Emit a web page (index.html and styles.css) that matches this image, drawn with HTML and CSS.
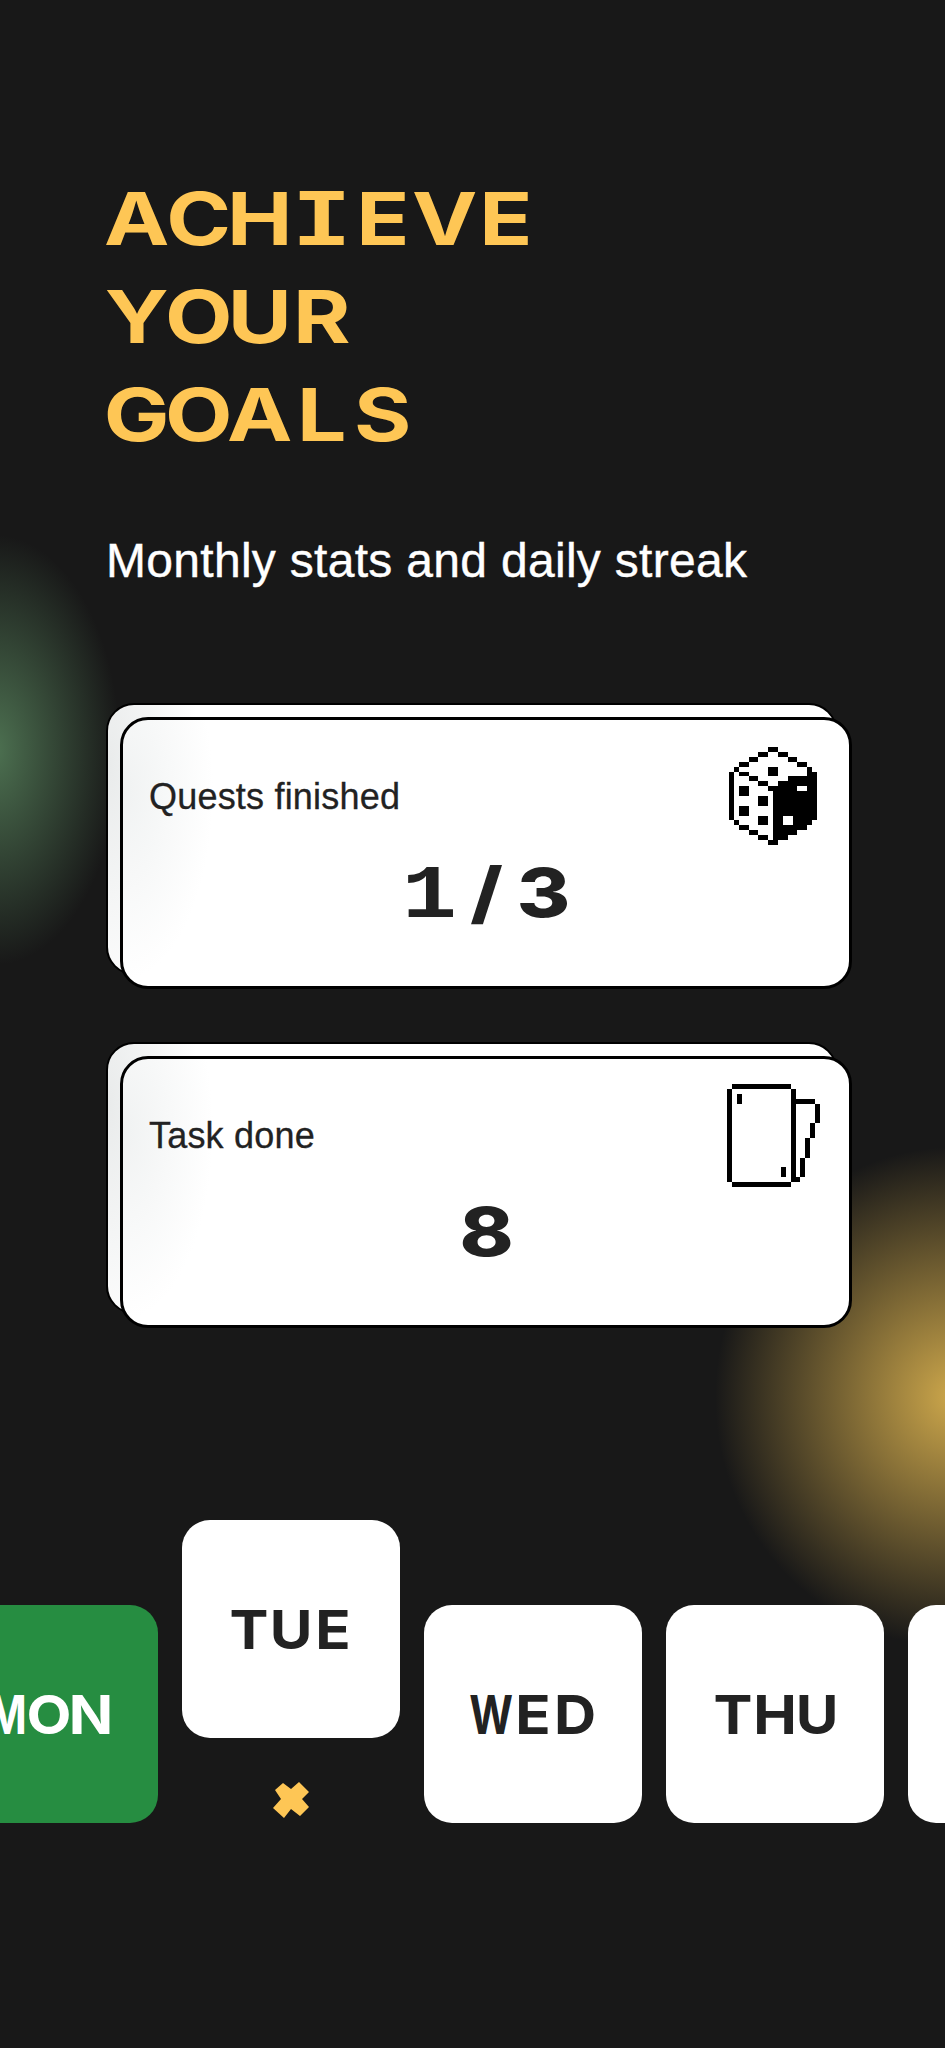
FILE: index.html
```html
<!DOCTYPE html>
<html lang="en">
<head>
    <meta charset="UTF-8">
    <meta name="viewport" content="width=device-width, initial-scale=1.0">
    <title>Achieve your goals</title>
    <link rel="stylesheet" href="styles.css">
</head>
<body>
    <main class="screen">
        <h1 class="title">
            <span class="line"><span class="ch">A</span><span class="ch">C</span><span class="ch">H</span><span class="ch ch-slab">I</span><span class="ch">E</span><span class="ch">V</span><span class="ch">E</span></span>
            <span class="line"><span class="ch">Y</span><span class="ch">O</span><span class="ch">U</span><span class="ch">R</span></span>
            <span class="line"><span class="ch">G</span><span class="ch">O</span><span class="ch">A</span><span class="ch">L</span><span class="ch">S</span></span>
        </h1>
        <p class="subtitle">Monthly stats and daily streak</p>

        <section class="stats">
            <div class="card-back">
                <div class="card">
                    <div class="card-head">
                        <span class="card-label">Quests finished</span>
                        <svg class="dice" viewBox="0 0 18 20" shape-rendering="crispEdges">
                            <path d="M8 .5h2M6 1.5h2M10 1.5h2M4 2.5h2M12 2.5h2M2 3.5h2M14 3.5h2
                                     M1 4.5h1M8 4.5h2M16 4.5h1M0 5.5h1M2 5.5h2M8 5.5h2M16 5.5h2
                                     M0 6.5h1M4 6.5h2M12 6.5h6M0 7.5h1M6 7.5h2M10 7.5h8
                                     M0 8.5h1M2 8.5h2M8 8.5h6M16 8.5h2M0 9.5h1M2 9.5h2M9 9.5h9
                                     M0 10.5h1M6 10.5h2M9 10.5h9M0 11.5h1M6 11.5h2M9 11.5h9
                                     M0 12.5h1M2 12.5h2M9 12.5h9M0 13.5h1M2 13.5h2M9 13.5h9
                                     M0 14.5h1M6 14.5h2M9 14.5h2M13 14.5h5M1 15.5h1M6 15.5h2M9 15.5h2M13 15.5h4
                                     M2 16.5h2M9 16.5h7M4 17.5h2M9 17.5h5M6 18.5h2M9 18.5h3M8 19.5h2"/>
                        </svg>
                    </div>
                    <div class="card-value"><span class="ch ch-slab">1</span><span class="ch">/</span><span class="ch">3</span></div>
                </div>
            </div>

            <div class="card-back">
                <div class="card">
                    <div class="card-head">
                        <span class="card-label">Task done</span>
                        <svg class="mug" viewBox="0 0 19 21" shape-rendering="crispEdges">
                            <path d="M1 .5h12M.5 1v19M1 20.5h12M13.5 1v19M2.5 2v2M11.5 17v2
                                     M14 3.5h4M18.5 4v4M17.5 8v3M16.5 11v4M15.5 15v4M14 19.5h1"/>
                        </svg>
                    </div>
                    <div class="card-value"><span class="ch">8</span></div>
                </div>
            </div>
        </section>

        <section class="days">
            <div class="day day-done"><span class="day-name"><span class="ch ch-wide">M</span><span class="ch">O</span><span class="ch">N</span></span></div>
            <div class="day-today">
                <div class="day"><span class="day-name"><span class="ch">T</span><span class="ch">U</span><span class="ch">E</span></span></div>
                <svg class="day-mark" viewBox="0 0 37 36">
                    <path d="M2 8 10 1 18 7 26 0 36 10 29 17 36 25 27 34 18 27 11 36 0 26 8 17z"/>
                </svg>
            </div>
            <div class="day"><span class="day-name"><span class="ch ch-wide">W</span><span class="ch">E</span><span class="ch">D</span></span></div>
            <div class="day"><span class="day-name"><span class="ch">T</span><span class="ch">H</span><span class="ch">U</span></span></div>
            <div class="day"></div>
        </section>
    </main>
</body>
</html>
```

FILE: styles.css
```css
body {
    margin: 0;
    background-color: #181818;
    font-family: "Liberation Sans", Arial, sans-serif;
}
.screen {
    box-sizing: border-box;
    width: 945px;
    height: 2048px;
    padding-top: 170px;
    overflow: hidden;
    background-image:
        radial-gradient(ellipse 125px 215px at -5px 750px, rgba(90, 135, 95, 0.8), rgba(90, 135, 95, 0)),
        radial-gradient(ellipse 240px 250px at 955px 1397px, rgba(215, 175, 78, 0.95), rgba(215, 175, 78, 0));
}
.ch {
    display: inline-flex;
    justify-content: center;
    transform: scaleX(1.2);
}
/* the I and the 1 have feet in the original face */
.ch-slab {
    font-family: "Liberation Mono", monospace;
    font-size: 1.12em;
    font-weight: bold;
}
.title {
    margin: 0 0 0 106px;
    font-family: Inter, sans-serif;
    font-size: 73px;
    font-weight: 700;
    line-height: 98px;
    color: #fec655;
}
.title .ch {
    width: 61.5px;
}
.line {
    display: block;
    height: 98px;
}
.subtitle {
    margin: 67px 0 0 106px;
    font-size: 48px;
    line-height: 60px;
    letter-spacing: 0.3px;
    color: #fff;
    -webkit-text-stroke: 0.4px #fff;
}
.stats {
    margin: 112px 0 0 106px;
}
.card-back {
    box-sizing: border-box;
    width: 731px;
    height: 272px;
    margin-bottom: 67px;
    background: radial-gradient(ellipse 90px 260px at 0 60px, #e9ebeb, #fff);
    border: 2px solid #000;
    border-radius: 28px;
}
.card {
    box-sizing: border-box;
    width: 732px;
    height: 272px;
    margin-left: 12px;
    padding: 27px 26px 0;
    position: relative;
    top: 12px;
    background: radial-gradient(ellipse 90px 190px at 0 70px, #f0f2f2, #fff);
    border: 3px solid #000;
    border-radius: 28px;
}
.card-head {
    display: flex;
    justify-content: space-between;
    align-items: flex-start;
    height: 98px;
}
.card-label {
    margin-top: 30px;
    font-size: 36px;
    line-height: 40px;
    letter-spacing: 0.2px;
    color: #222;
    -webkit-text-stroke: 0.3px #222;
}
.dice, .mug {
    fill: none;
    stroke: #000;
    stroke-width: 1;
}
.dice {
    width: 88px;
    height: 98px;
    margin-right: 6px;
}
.mug {
    width: 93px;
    height: 103px;
    margin: -2px 3px 0 0;
}
.card-value {
    display: flex;
    justify-content: center;
    align-items: baseline;
    height: 70px;
    margin-top: 12px;
    font-family: Inter, sans-serif;
    font-size: 68px;
    font-weight: 800;
    line-height: 70px;
    color: #222;
}
.card-value .ch {
    width: 57px;
}
.days {
    display: flex;
    align-items: flex-start;
    gap: 24px;
    margin: 206px 0 0 -60px;
}
.day {
    display: flex;
    align-items: center;
    justify-content: center;
    flex: none;
    width: 218px;
    height: 218px;
    margin-top: 85px;
    background: #fff;
    border-radius: 28px;
}
.day-done {
    background: #268d41;
}
.day-today {
    display: flex;
    flex-direction: column;
    align-items: center;
    gap: 44px;
}
.day-today .day {
    margin-top: 0;
}
.day-name {
    display: flex;
    font-family: Inter, sans-serif;
    font-size: 54px;
    font-weight: 700;
    color: #222;
}
.day-name .ch {
    width: 42px;
    transform: scaleX(1.08);
}
.day-name .ch-wide {
    transform: scaleX(0.78);
}
.day-done .day-name {
    color: #fff;
}
.day-mark {
    width: 37px;
    height: 36px;
    fill: #fec655;
}
```
